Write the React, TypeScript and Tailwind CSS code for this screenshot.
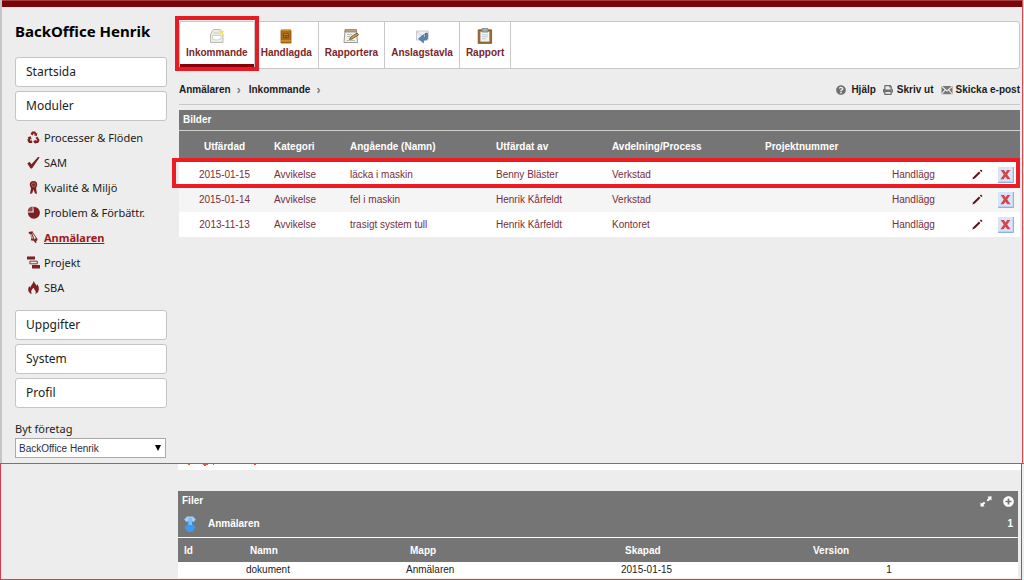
import type { ReactNode } from "react";
import { FaQuestionCircle, FaPrint, FaPlusCircle } from "react-icons/fa";

const SIDE = "font-['Noto_Sans',sans-serif]";

function RecycleIcon() {
  return (
    <svg viewBox="0 0 13 13" className="size-[13px]" fill="currentColor" aria-hidden="true">
      <path d="M3.6 3 L5 0.6 H8.2 L9.4 2.4 L10.4 1.8 L9.8 5 L6.8 4.2 L7.8 3.5 L6.9 2.2 L5.5 4.4Z" />
      <path d="M10.2 5.6 L12.6 9 L11.2 12 H8.6 V13 L6.2 10.8 L8.6 8.4 V9.6 H10.4 L8.6 6.8Z" />
      <path d="M5.2 12 H1.9 L0.3 9 L1.5 6.9 L0.5 6.2 L3.8 5.2 L4.6 8.4 L3.5 7.9 L2.8 9.4 H5.2Z" />
    </svg>
  );
}

function CheckIcon() {
  return (
    <svg viewBox="0 0 13 13" className="size-[13px]" fill="currentColor" aria-hidden="true">
      <path d="M0.3 7.6 L2.6 5.8 L4.4 8.3 L11 1 L12.7 1.2 L5 12.6 L3.6 12.4 Z" />
    </svg>
  );
}

function RosetteIcon() {
  return (
    <svg viewBox="0 0 13 13" className="size-[13px]" fill="currentColor" aria-hidden="true">
      <path d="M4.2 6 L3 13 L5.2 12.2 L6.5 8.6 L7.9 12.2 L10 13 L8.9 6 Z" />
      <circle cx="6.5" cy="3.8" r="3.7" />
      <circle cx="6.5" cy="3.8" r="1.9" fill="none" stroke="#ededed" strokeWidth="0.5" opacity="0.7" />
    </svg>
  );
}

function PieIcon() {
  return (
    <svg viewBox="0 0 13 13" className="size-[13px]" fill="currentColor" aria-hidden="true">
      <path d="M6.4 0.8 A6 6 0 1 1 0.9 6.4 L6.8 6.6Z" />
      <path d="M5.6 0.6 V5.6 H0.6 A5.4 5.4 0 0 1 5.6 0.6Z" opacity="0.8" />
    </svg>
  );
}

function PinIcon() {
  return (
    <svg viewBox="0 0 13 13" className="size-[13px]" fill="currentColor" aria-hidden="true">
      <path d="M1.6 1 L5.6 0.2 L6 1.8 L5.2 2.2 L7.2 7.4 L8 9 L9.6 11.6 L8.8 12.2 L6.4 9.4 L4.6 9.8 L4 8.8 L4.6 6.6 L3.2 3 L1.8 2.6 Z" />
      <path d="M4 3 L6 8" stroke="#ededed" strokeWidth="0.7" />
      <path d="M5.6 1.4 L9.6 7.4 L8.6 11" fill="none" stroke="currentColor" strokeWidth="0.9" />
      <circle cx="9" cy="8.6" r="1.4" />
    </svg>
  );
}

function GanttIcon() {
  return (
    <svg viewBox="0 0 13 13" className="size-[13px]" fill="currentColor" aria-hidden="true">
      <path d="M0 0.6h8v3H0zM5 9h8v3.4H5z" />
      <path d="M2.9 5.2h7.4v2.6H2.9z" fill="none" stroke="currentColor" strokeWidth="0.9" />
    </svg>
  );
}

function FlameIcon() {
  return (
    <svg viewBox="0 0 13 13" className="size-[13px]" fill="currentColor" aria-hidden="true">
      <path d="M6.6 0 C7.4 2 8.9 3 9.3 4.8 C10 4.4 10.1 3.7 10 3.1 C11.4 4.6 12 6.4 11.8 8.4 C11.6 11 9.6 12.6 8.2 13 C9.1 11.6 8.9 10.2 7.9 9.2 C7.2 8.5 6.8 7.7 6.9 6.8 C5.3 7.8 4.1 9.4 4.2 11 C4.2 11.8 4.4 12.4 4.8 13 C2.6 12.4 1 10.6 1.2 8.2 C1.3 6.8 1.9 5.8 2.6 5 C2.8 5.8 3 6.2 3.5 6.4 C3.8 3.8 6.4 2.6 6.6 0Z" />
    </svg>
  );
}

function InboxIcon() {
  return (
    <svg viewBox="0 0 16 16" className="size-4" aria-hidden="true">
      <path d="M1.5 6 L4.5 1.5 H11 L14 6 V14.5 H1.5 Z" fill="#ececea" stroke="#b9b9b6" />
      <path d="M3.5 7.5 H12 V11 H9.5 L8.5 12 H6.5 L5.5 11 H3.5Z" fill="#fff" stroke="#c9c9c4" strokeWidth="0.8" />
      <path d="M4.5 5 H10" stroke="#c9c9c4" />
      <path d="M12.3 0.8 L13.1 3 L15.6 3.1 L13.7 4.7 L14.6 7.2 L12.3 5.8 L10 7.2 L10.9 4.7 L9 3.1 L11.5 3Z" fill="#f6e64a" />
    </svg>
  );
}

function BookIcon() {
  return (
    <svg viewBox="0 0 16 16" className="size-4" aria-hidden="true">
      <path d="M3 2 H13 V15 H3 Z" fill="#ae6b16" stroke="#8c5310" strokeWidth="0.8" />
      <path d="M3 2.2 H13 M3 12.8 H13" stroke="#d79a35" strokeWidth="1.2" />
      <path d="M5.3 5.2h5.4v5H5.3z" fill="#7c4a10" />
      <path d="M6.2 6.4 h3.6 M6.2 8.6h1.2 M8.6 8.6h1.2" stroke="#d39640" strokeWidth="0.9" />
    </svg>
  );
}

function NotepadIcon() {
  return (
    <svg viewBox="0 0 16 16" className="size-4" aria-hidden="true">
      <path d="M2 2.5 H13.5 L14.5 14.5 H1 Z" fill="#f2f2ef" stroke="#9a9a96" />
      <path d="M2 1.5 H13.5 V4 H2Z" fill="#b9a27a" stroke="#8a826f" strokeWidth="0.8" />
      <path d="M4 6.5 H9 M4 8.5 H7 M3.5 12.5 H12" stroke="#b4b4b0" strokeWidth="0.9" />
      <path d="M6.5 11.5 L7.5 9.2 L14 5 L15.5 6.8 L9 11Z" fill="#d2a248" stroke="#5b4523" strokeWidth="0.8" />
    </svg>
  );
}

function BoardIcon() {
  return (
    <svg viewBox="0 0 16 16" className="size-4" aria-hidden="true">
      <path d="M2.5 3 H14 V12 H2.5 Z" fill="#eef0f3" stroke="#c6cad0" />
      <path d="M2.8 3.6 L8.2 8.4 L13.6 3.6" fill="none" stroke="#c3c7cd" />
      <path d="M13.6 5.5 V9.8 C13.6 11.2 12.6 12 11 12 H9.4 V14.8 L4.6 10.7 L9.4 6.8 V9.4 H11 V5.5Z" fill="#5c86b8" stroke="#3d638f" strokeWidth="0.7" />
    </svg>
  );
}

function ClipboardIcon() {
  return (
    <svg viewBox="0 0 16 16" className="size-4" aria-hidden="true">
      <path d="M1.2 1.8 H14.6 V15.4 H1.2Z" fill="#9b6a32" stroke="#7a5224" strokeWidth="0.8" />
      <path d="M3.4 3.6 H12.4 V13.6 H3.4Z" fill="#f1f2f4" />
      <path d="M5 6.8 H11 M5 8.8 H11 M5 10.8 H9" stroke="#c5c8cd" strokeWidth="0.9" />
      <path d="M5 0.6 H11 V4 H5Z" fill="#a9adb2" stroke="#73777c" strokeWidth="0.8" />
    </svg>
  );
}

function MailIcon() {
  return (
    <svg viewBox="0 0 12 10" className="h-[10px] w-3" aria-hidden="true">
      <path d="M0.5 1H11.5V9.2H0.5Z" fill="#777" />
      <path d="M0.8 1.3 L6 6 L11.2 1.3 M0.8 9 L4.2 4.8 M11.2 9 L7.8 4.8" fill="none" stroke="#ededed" strokeWidth="1.1" />
    </svg>
  );
}

function PencilIcon() {
  return (
    <svg viewBox="0 0 11 11" className="size-[11px]" fill="#5e0f14" aria-hidden="true">
      <path d="M0.4 10.6 L1.2 8.2 L7 2.6 L8.4 4 L2.8 9.6 Z" />
      <path d="M7.8 1.7 L9 0.6 L10.5 2 L9.3 3.1Z" />
    </svg>
  );
}

function DeleteIcon() {
  return (
    <svg viewBox="0 0 16 16" className="size-4" aria-hidden="true">
      <path d="M0 0H16V16H0Z" fill="#b9d4f2" />
      <path d="M0 0H14.5V14H0Z" fill="#d6e6f8" />
      <path d="M15.5 0V15.5H0" fill="none" stroke="#8fb3dc" />
      <path d="M2.6 3H6L7.5 5.4L9.2 3H12.4L9.2 7.6L12.6 12.2H9.2L7.4 9.7L5.6 12.2H2.4L5.8 7.6Z" fill="#d8434c" />
    </svg>
  );
}

function ResizeIcon() {
  return (
    <svg viewBox="0 0 12 11" className="h-[11px] w-3" fill="#fff" aria-hidden="true">
      <path d="M11.5 0.3 V4.6 L10.2 3.6 L8 5.4 L6.6 4.1 L8.6 2.2 L7.4 0.8Z M0.5 10.6 V6.6 L1.8 7.6 L4 5.8 L5.4 7 L3.4 9 L4.6 10.4Z" />
    </svg>
  );
}

function ArrowIcon() {
  return (
    <svg viewBox="0 0 12 16" className="h-4 w-3" aria-hidden="true">
      <path d="M3 0.5 H9 L11.8 3.5 L9.6 6 H2.4 L0.2 3.5Z" fill="#9fd0fb" />
      <path d="M3 5 H9 L8 8 L11.6 11.2 L10.4 13 L8.5 15.8 H3.6 L1.6 13 L0.4 11.2 L4 8Z" fill="#3d9bf3" />
      <path d="M4.5 2 H8 V9 H4.5Z" fill="#7abdf9" />
    </svg>
  );
}

const modules: { label: string; icon: ReactNode; active?: boolean }[] = [
  { label: "Processer & Flöden", icon: <RecycleIcon /> },
  { label: "SAM", icon: <CheckIcon /> },
  { label: "Kvalité & Miljö", icon: <RosetteIcon /> },
  { label: "Problem & Förbättr.", icon: <PieIcon /> },
  { label: "Anmälaren", icon: <PinIcon />, active: true },
  { label: "Projekt", icon: <GanttIcon /> },
  { label: "SBA", icon: <FlameIcon /> },
];

const tabs = [
  { label: "Inkommande", icon: <InboxIcon />, active: true },
  { label: "Handlagda", icon: <BookIcon /> },
  { label: "Rapportera", icon: <NotepadIcon /> },
  { label: "Anslagstavla", icon: <BoardIcon /> },
  { label: "Rapport", icon: <ClipboardIcon /> },
];

const reports = [
  ["2015-01-15", "Avvikelse", "läcka i maskin", "Benny Bläster", "Verkstad"],
  ["2015-01-14", "Avvikelse", "fel i maskin", "Henrik Kårfeldt", "Verkstad"],
  ["2013-11-13", "Avvikelse", "trasigt system tull", "Henrik Kårfeldt", "Kontoret"],
];

function SideButton({ children }: { children: ReactNode }) {
  return (
    <button type="button" className="h-[30px] w-full rounded-[3px] border border-[#c4c4c4] bg-white px-[10px] text-left text-[12px] leading-4 text-[#1c1c1c]">
      {children}
    </button>
  );
}

function Sidebar() {
  return (
    <aside className={`w-[152px] shrink-0 text-[#1c1c1c] ${SIDE}`}>
      <h1 className="pt-3 text-[15px] leading-6 font-bold text-black">BackOffice Henrik</h1>
      <div className="mt-[14px] flex flex-col gap-1">
        <SideButton>Startsida</SideButton>
        <SideButton>Moduler</SideButton>
      </div>
      <nav className="mt-1 mb-[10px] pl-3">
        {modules.map((m) => (
          <a key={m.label} href="#" className="flex h-[25px] items-center gap-1 text-[11px] leading-4 whitespace-nowrap">
            <span className="flex w-[13px] shrink-0 justify-center text-[#7e1f20]">{m.icon}</span>
            <span className={m.active ? "font-bold text-[#9c1a1c] underline" : ""}>{m.label}</span>
          </a>
        ))}
      </nav>
      <div className="flex flex-col gap-1">
        <SideButton>Uppgifter</SideButton>
        <SideButton>System</SideButton>
        <SideButton>Profil</SideButton>
      </div>
      <label htmlFor="company" className="mt-[13px] block text-[11px] leading-4">
        Byt företag
      </label>
      <div className="relative mt-px mr-px">
        <select id="company" className="block h-5 w-full appearance-none border border-[#a9a9a9] bg-white pl-[3px] font-['Liberation_Sans',sans-serif] text-[10px] text-[#2c2c3c]">
          <option>BackOffice Henrik</option>
        </select>
        <span className="pointer-events-none absolute top-1/2 right-[5px] -translate-y-1/2 border-x-[3px] border-t-[6px] border-x-transparent border-t-black" />
      </div>
    </aside>
  );
}

function Tabs() {
  return (
    <nav className="flex h-12 rounded-[3px] border border-[#c9c9c9] bg-white">
      {tabs.map((t) => (
        <a
          key={t.label}
          href="#"
          className="relative flex flex-col items-center border-r border-[#c9c9c9] px-[6px] pt-[6px] text-[10px] leading-4 font-bold text-[#7c2529]"
        >
          {t.icon}
          <span className="mt-px">{t.label}</span>
          {t.active && (
            <>
              <span className="absolute inset-x-0 bottom-px h-[3px] bg-[#8a0008]" />
              <span className="absolute -inset-x-[5px] -top-[6px] -bottom-[3px] z-10 border-4 border-[#e61c25]" />
            </>
          )}
        </a>
      ))}
    </nav>
  );
}

function ReportTable() {
  return (
    <section className="bg-white text-[10px] leading-4">
      <h2 className="border-b border-[#d0d0cc] bg-[#757575] px-1 leading-5 font-bold text-white">Bilder</h2>
      <table className="w-full table-fixed border-collapse text-left">
        <colgroup>
          <col className="w-[91px]" />
          <col className="w-[76px]" />
          <col className="w-[146px]" />
          <col className="w-[116px]" />
          <col className="w-[153px]" />
          <col />
          <col className="w-[74px]" />
          <col className="w-[30px]" />
          <col className="w-[28px]" />
        </colgroup>
        <thead className="h-[31px] bg-[#757575] text-white">
          <tr>
            <th className="text-center">Utfärdad</th>
            <th className="px-1">Kategori</th>
            <th className="px-1">Angående (Namn)</th>
            <th className="px-1">Utfärdat av</th>
            <th className="px-1">Avdelning/Process</th>
            <th className="px-1">Projektnummer</th>
            <td colSpan={3} />
          </tr>
        </thead>
        <tbody className="text-[#762d3c]">
          {reports.map((r, i) => (
            <tr key={r[0]} className={`relative h-[25px] ${i === 1 ? "bg-[#f5f5f5]" : "bg-white"}`}>
              <td className="text-center">
                {r[0]}
                {i === 0 && <span className="pointer-events-none absolute -top-1 right-0 -bottom-px -left-[7px] z-10 border-4 border-[#ed1c24]" />}
              </td>
              <td className="px-1">{r[1]}</td>
              <td className="px-1">{r[2]}</td>
              <td className="px-1">{r[3]}</td>
              <td className="px-1">{r[4]}</td>
              <td />
              <td className="px-1">
                <a href="#">Handlägg</a>
              </td>
              <td>
                <button type="button" aria-label="Redigera" className="mx-auto block">
                  <PencilIcon />
                </button>
              </td>
              <td>
                <button type="button" aria-label="Ta bort" className="mx-auto block">
                  <DeleteIcon />
                </button>
              </td>
            </tr>
          ))}
        </tbody>
      </table>
    </section>
  );
}

function Files() {
  return (
    <section className="bg-white text-[10px] leading-4">
      <div className="bg-[#757575] px-1 font-bold text-white">
        <div className="flex h-5 items-center">
          <h2 className="flex-1">Filer</h2>
          <button type="button" aria-label="Förstora" className="mr-[11px]">
            <ResizeIcon />
          </button>
          <button type="button" aria-label="Lägg till">
            <FaPlusCircle size={11} />
          </button>
        </div>
        <div className="flex h-[26px] items-center gap-3 pr-px pl-[2px]">
          <ArrowIcon />
          <span className="flex-1">Anmälaren</span>
          <span>1</span>
        </div>
      </div>
      <table className="mt-px w-full table-fixed border-collapse text-left">
        <colgroup>
          <col className="w-[68px]" />
          <col className="w-[160px]" />
          <col className="w-[215px]" />
          <col className="w-[188px]" />
          <col className="w-[160px]" />
          <col />
        </colgroup>
        <thead>
          <tr className="h-6 bg-[#757575] text-white">
            <th className="px-[6px] pt-[2px]">Id</th>
            <th className="px-1 pt-[2px]">Namn</th>
            <th className="px-1 pt-[2px]">Mapp</th>
            <th className="px-1 pt-[2px]">Skapad</th>
            <th className="px-1 pt-[2px]">Version</th>
            <td />
          </tr>
        </thead>
        <tbody>
          <tr className="h-4 text-[#222]">
            <td />
            <td>dokument</td>
            <td>Anmälaren</td>
            <td>2015-01-15</td>
            <td className="text-center">1</td>
            <td />
          </tr>
        </tbody>
      </table>
    </section>
  );
}

export default function App() {
  return (
    <div className="min-h-screen bg-[#ededed] font-['Liberation_Sans',sans-serif]">
      <div className="mr-px border-r border-l-2 border-r-[#e0444c] border-l-[#c6c6c6] pb-[5px]">
        <header className="h-[7px] border-t border-[#a04040] bg-[#7d0508]" />
        <div className="flex gap-3 pr-[2px] pl-[13px]">
          <Sidebar />
          <main className="min-w-0 flex-1 pt-[14px]">
            <Tabs />
            <div className="mt-[13px] mb-[5px] flex items-center border-b border-[#c9c9c9] pb-[6px] text-[10px] leading-4 font-bold text-[#1c1c1c]">
              <a href="#">Anmälaren</a>
              <span className="ml-[6px] text-[12px] text-[#777]">›</span>
              <a href="#" className="ml-2">
                Inkommande
              </a>
              <span className="ml-[6px] text-[12px] text-[#777]">›</span>
              <div className="ml-auto flex gap-[7px]">
                <a href="#" className="flex items-center gap-[5px]">
                  <FaQuestionCircle size={10} color="#707070" />
                  Hjälp
                </a>
                <a href="#" className="flex items-center gap-1">
                  <FaPrint size={10} color="#707070" />
                  Skriv ut
                </a>
                <a href="#" className="flex items-center gap-[3px]">
                  <MailIcon />
                  Skicka e-post
                </a>
              </div>
            </div>
            <ReportTable />
          </main>
        </div>
      </div>
      <div className="h-px bg-[#e0444c]" />
      <div className="mr-[2px] border-r border-b border-l border-[#d63a4c] pb-px">
        <div className="pl-[177px]">
          <svg className="block h-[6px] w-full bg-white" aria-hidden="true">
            <path d="M10 0h2v1h-2zM25 0h5v1h-2v1h-2v-1h-1zM35 0h1v1h-1zM76 0h2v1h-2z" fill="#f0504c" />
          </svg>
          <div className="mt-[21px] mr-[3px]">
            <Files />
          </div>
        </div>
      </div>
    </div>
  );
}
